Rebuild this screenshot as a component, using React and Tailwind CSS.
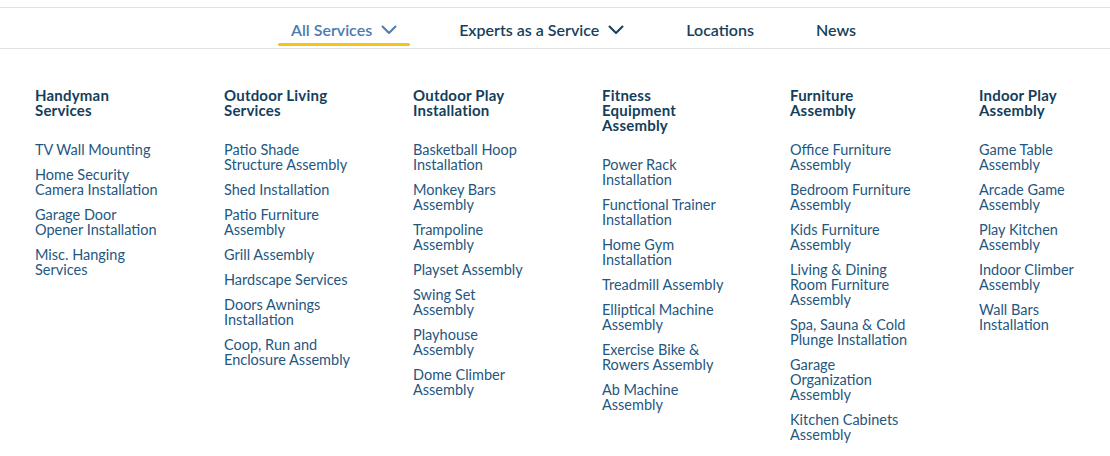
const nav = [
  { label: "All Services", chevron: true, active: true },
  { label: "Experts as a Service", chevron: true },
  { label: "Locations" },
  { label: "News" },
];

const columns = [
  {
    title: ["Handyman", "Services"],
    items: [
      ["TV Wall Mounting"],
      ["Home Security", "Camera Installation"],
      ["Garage Door", "Opener Installation"],
      ["Misc. Hanging", "Services"],
    ],
  },
  {
    title: ["Outdoor Living", "Services"],
    items: [
      ["Patio Shade", "Structure Assembly"],
      ["Shed Installation"],
      ["Patio Furniture", "Assembly"],
      ["Grill Assembly"],
      ["Hardscape Services"],
      ["Doors Awnings", "Installation"],
      ["Coop, Run and", "Enclosure Assembly"],
    ],
  },
  {
    title: ["Outdoor Play", "Installation"],
    items: [
      ["Basketball Hoop", "Installation"],
      ["Monkey Bars", "Assembly"],
      ["Trampoline", "Assembly"],
      ["Playset Assembly"],
      ["Swing Set", "Assembly"],
      ["Playhouse", "Assembly"],
      ["Dome Climber", "Assembly"],
    ],
  },
  {
    title: ["Fitness", "Equipment", "Assembly"],
    items: [
      ["Power Rack", "Installation"],
      ["Functional Trainer", "Installation"],
      ["Home Gym", "Installation"],
      ["Treadmill Assembly"],
      ["Elliptical Machine", "Assembly"],
      ["Exercise Bike &", "Rowers Assembly"],
      ["Ab Machine", "Assembly"],
    ],
  },
  {
    title: ["Furniture", "Assembly"],
    items: [
      ["Office Furniture", "Assembly"],
      ["Bedroom Furniture", "Assembly"],
      ["Kids Furniture", "Assembly"],
      ["Living & Dining", "Room Furniture", "Assembly"],
      ["Spa, Sauna & Cold", "Plunge Installation"],
      ["Garage", "Organization", "Assembly"],
      ["Kitchen Cabinets", "Assembly"],
    ],
  },
  {
    title: ["Indoor Play", "Assembly"],
    items: [
      ["Game Table", "Assembly"],
      ["Arcade Game", "Assembly"],
      ["Play Kitchen", "Assembly"],
      ["Indoor Climber", "Assembly"],
      ["Wall Bars", "Installation"],
    ],
  },
];

const Chevron = () => (
  <svg width="16" height="10" viewBox="0 0 16 10" fill="none">
    <polyline
      points="1.5,1.5 8,8 14.5,1.5"
      stroke="currentColor"
      strokeWidth="2"
      strokeLinecap="round"
      strokeLinejoin="round"
    />
  </svg>
);

const Lines = ({ lines }) =>
  lines.map((l, i) => (
    <span key={i} className="block whitespace-nowrap">
      {l}
    </span>
  ));

export default function App() {
  return (
    <div className="w-[1110px] h-[456px] bg-white font-['Lato','Noto_Sans',sans-serif] pt-[7px]">
      {/* Top nav */}
      <nav className="flex h-[42px] border-y border-[#e2e2e2] pl-[278px] gap-[36px]">
        {nav.map((n) => (
          <a
            key={n.label}
            href="#"
            className={`relative flex items-center gap-[9px] px-[13px] pt-[3px] text-[16px] font-semibold ${
              n.active ? "text-[#4a7bb0]" : "text-[#173f5c]"
            }`}
          >
            <span>{n.label}</span>
            {n.chevron && <Chevron />}
            {n.active && (
              <span className="absolute left-0 right-0 bottom-[2px] h-[3px] rounded-full bg-[#f6c31b]" />
            )}
          </a>
        ))}
      </nav>

      {/* Mega menu */}
      <div className="grid grid-cols-[189px_189px_189px_188px_189px_131px] pl-[35px] pt-[39px]">
        {columns.map((c) => (
          <div key={c.title.join(" ")} className="flex flex-col">
            <h3 className="text-[15px] leading-[15px] font-bold tracking-[0.2px] text-[#133e5c]">
              <Lines lines={c.title} />
            </h3>
            <ul className="mt-[24px] flex flex-col gap-[10px]">
              {c.items.map((it) => (
                <li key={it.join(" ")}>
                  <a href="#" className="block text-[14.5px] leading-[15px] text-[#1f5781]">
                    <Lines lines={it} />
                  </a>
                </li>
              ))}
            </ul>
          </div>
        ))}
      </div>
    </div>
  );
}
